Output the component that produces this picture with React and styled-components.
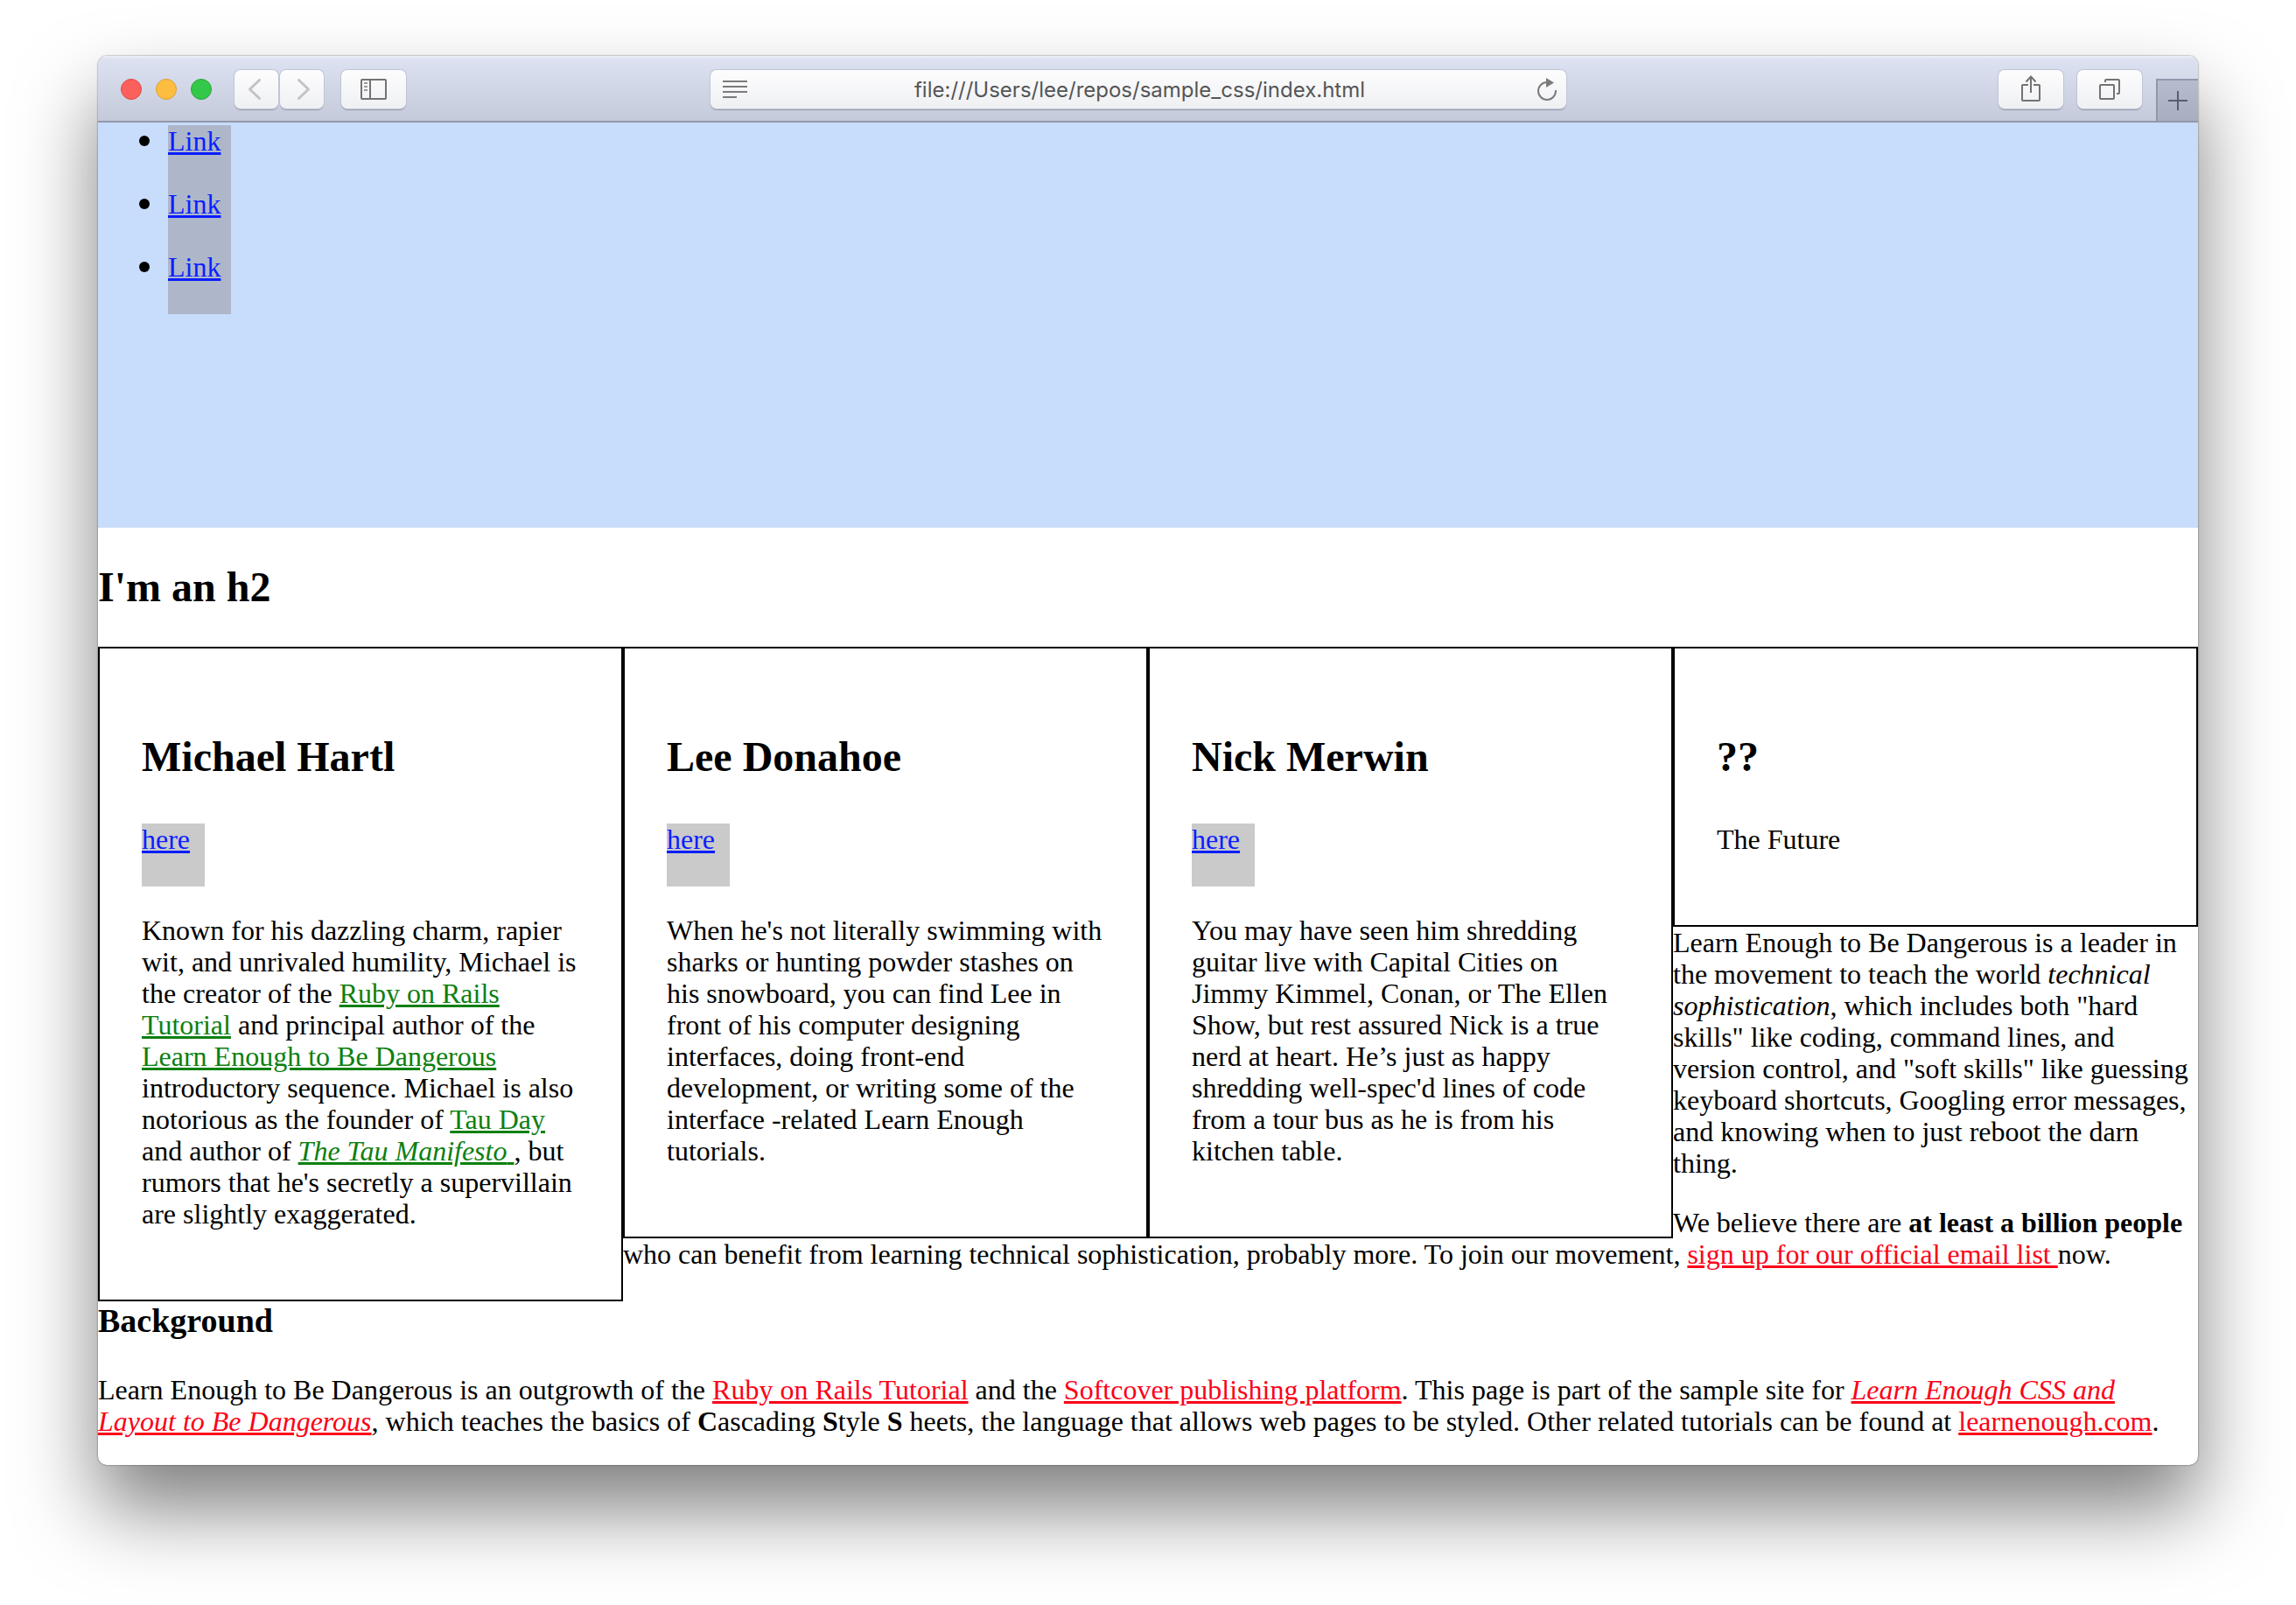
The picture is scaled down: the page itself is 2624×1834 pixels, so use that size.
import React from "react";
import styled, { createGlobalStyle, css } from "styled-components";

const GlobalStyle = createGlobalStyle`
  *, *::before, *::after { box-sizing: border-box; }
  body {
    margin: 0;
    background: #fff;
    color: #000;
    font-family: "Liberation Serif", "Times New Roman", Times, serif;
    font-size: 32px;
    line-height: 36px;
  }
`;

const BrowserWindow = styled.div`
  margin: 64px 112px 160px;
  border-radius: 10px;
  background: #fff;
  box-shadow: 0 0 2px rgba(0, 0, 0, 0.6), 0 50px 90px rgba(0, 0, 0, 0.5);
  overflow: hidden;
`;

const Toolbar = styled.header`
  display: flex;
  height: 76px;
  padding-left: 26px;
  border-bottom: 2px solid #9298ac;
  background: linear-gradient(#dde3f3, #c5cada);
  box-shadow: inset 0 2px 0 #e9edf7;
`;

const ToolbarGrid = styled.div`
  flex: 1;
  display: grid;
  grid-template-columns: 1fr minmax(0, 978px) 1fr;
  padding-top: 16px;
`;

const ToolGroup = styled.div`
  display: flex;
  align-items: flex-start;
  gap: ${(p) => p.$gap}px;
  justify-content: ${(p) => (p.$end ? "flex-end" : "flex-start")};
  padding-right: ${(p) => (p.$end ? 16 : 0)}px;
`;

const Lights = styled.div`
  display: flex;
  align-items: center;
  gap: 16px;
  height: 44px;
  margin-right: 6px;
`;

const Light = styled.button`
  width: 24px;
  height: 24px;
  padding: 0;
  border: 1px solid ${(p) => p.$edge};
  border-radius: 50%;
  background: ${(p) => p.$fill};
`;

const raised = css`
  height: 44px;
  border: 0;
  border-radius: 7px;
  background: linear-gradient(#fdfdfe, #eff0f2);
  box-shadow: 0 0 0 1px #bfc4d6, 0 2px 1px #9a9db0;
`;

const ToolButton = styled.button`
  ${raised}
  display: flex;
  align-items: center;
  justify-content: center;
  width: ${(p) => (p.$wide ? 74 : 50)}px;
  padding: 0;
  color: ${(p) => (p.$faded ? "#c3c3c5" : "#737373")};
`;

const NavPair = styled.div`
  display: flex;
  gap: 2px;
`;

const AddressBar = styled.form`
  ${raised}
  display: flex;
  align-items: center;
  padding: 0 11px 0 14px;
`;

const AddressButton = styled.button`
  display: flex;
  padding: 0;
  border: 0;
  background: none;
  color: #7b7b7b;
`;

const AddressInput = styled.input`
  flex: 1;
  min-width: 0;
  padding: 2px 6px 0 0;
  border: 0;
  outline: 0;
  background: none;
  color: #555;
  font: 24px/30px Inter, "Liberation Sans", sans-serif;
  text-align: center;
`;

const NewTab = styled.button`
  display: flex;
  align-items: center;
  justify-content: center;
  align-self: flex-end;
  width: 48px;
  height: 48px;
  padding: 0;
  border: 2px solid #9298ac;
  border-width: 2px 0 0 2px;
  background: linear-gradient(#b6bccd, #a8aebf);
  color: #585d70;
`;

const Icon = styled.svg`
  display: block;
  fill: none;
  stroke: currentColor;
  stroke-width: ${(p) => (p.$bold ? 3 : 2)}px;
`;

const Hero = styled.nav`
  height: 463px;
  padding-top: 3px;
  background: #c8dcfc;
`;

const LinkList = styled.ul`
  margin: 0;
  padding-left: 47px;
  list-style: none;
`;

const LinkItem = styled.li`
  display: flex;
  gap: 21px;

  &::before {
    content: "";
    width: 12px;
    height: 12px;
    margin-top: 12px;
    border-radius: 50%;
    background: #000;
  }
`;

const SquareLink = styled.a`
  display: block;
  width: 72px;
  height: 72px;
  background: ${(p) => (p.$onBlue ? "#aeb7ca" : "#cacaca")};
  color: #0a1eff;
`;

const PageTitle = styled.h2`
  margin: 40px 0;
  font-size: 48px;
  line-height: 56px;
`;

const Bio = styled.section`
  float: left;
  width: 25%;
  padding: 48px;
  border: 2px solid #000;
`;

const BioName = styled.h2`
  margin: 48px 0;
  font-size: 48px;
  line-height: 56px;
`;

const Paragraph = styled.p`
  margin: 0 0 32px;
  ${(p) => p.$spaced && "margin-top: 32px;"}
`;

const SectionTitle = styled.h3`
  clear: both;
  margin: 0 0 39px;
  font-size: 38px;
  line-height: 44px;
`;

const TextLink = styled.a`
  color: ${(p) => (p.$green ? "#0d8010" : "#fb0218")};
`;

function BackIcon() {
  return (
    <Icon width="20" height="24" viewBox="0 0 20 24" $bold strokeLinecap="round" strokeLinejoin="round">
      <path d="M13.500 1.500 2.500 12l11 10.500" />
    </Icon>
  );
}

function ForwardIcon() {
  return (
    <Icon width="20" height="24" viewBox="0 0 20 24" $bold strokeLinecap="round" strokeLinejoin="round">
      <path d="M6.500 1.500 17.500 12l-11 10.500" />
    </Icon>
  );
}

function SidebarIcon() {
  return (
    <Icon width="30" height="24" viewBox="0 0 30 24">
      <rect x="1" y="1" width="28" height="22" rx="1" />
      <path d="M11 1v22" />
      <path d="M4 5h4M4 9h4M4 13h4" opacity="0.7" />
    </Icon>
  );
}

function ReaderIcon() {
  return (
    <Icon width="28" height="20" viewBox="0 0 28 20">
      <path d="M0 1h28M0 7h28M0 13h28M0 19h16" />
    </Icon>
  );
}

function ReloadIcon() {
  return (
    <Icon width="22" height="28" viewBox="0 0 22 28">
      <path d="M11 6a10 10 0 1 0 10 10v-1" />
      <path d="M10 1v11l9-5.500z" fill="currentColor" stroke="none" />
    </Icon>
  );
}

function ShareIcon() {
  return (
    <Icon width="22" height="32" viewBox="0 0 22 32">
      <path d="M8 11H2a1 1 0 0 0-1 1v16a1 1 0 0 0 1 1h18a1 1 0 0 0 1-1V12a1 1 0 0 0-1-1h-6M11 20V2M5.500 7.500 11 1.500l5.500 6" />
    </Icon>
  );
}

function TabsIcon() {
  return (
    <Icon width="24" height="24" viewBox="0 0 24 24">
      <rect x="1" y="7" width="16" height="16" rx="1" />
      <path d="M7 4V2a1 1 0 0 1 1-1h14a1 1 0 0 1 1 1v14a1 1 0 0 1-1 1h-2" />
    </Icon>
  );
}

function PlusIcon() {
  return (
    <Icon width="22" height="22" viewBox="0 0 22 22">
      <path d="M11 0v22M0 11h22" />
    </Icon>
  );
}

const lights = [
  { label: "Close", fill: "#fc605c", edge: "#e04744" },
  { label: "Minimize", fill: "#fdbd41", edge: "#dfa032" },
  { label: "Zoom", fill: "#34c84a", edge: "#27a637" },
];

function BrowserToolbar() {
  return (
    <Toolbar>
      <ToolbarGrid>
        <ToolGroup $gap={20}>
          <Lights>
            {lights.map((l) => (
              <Light key={l.label} type="button" aria-label={l.label} $fill={l.fill} $edge={l.edge} />
            ))}
          </Lights>
          <NavPair>
            <ToolButton type="button" aria-label="Back" $faded><BackIcon /></ToolButton>
            <ToolButton type="button" aria-label="Forward" $faded><ForwardIcon /></ToolButton>
          </NavPair>
          <ToolButton type="button" aria-label="Show sidebar" $wide><SidebarIcon /></ToolButton>
        </ToolGroup>
        <AddressBar>
          <AddressButton type="button" aria-label="Reader view"><ReaderIcon /></AddressButton>
          <AddressInput
            aria-label="Address"
            readOnly
            value="file:///Users/lee/repos/sample_css/index.html"
          />
          <AddressButton type="button" aria-label="Reload"><ReloadIcon /></AddressButton>
        </AddressBar>
        <ToolGroup $gap={16} $end>
          <ToolButton type="button" aria-label="Share" $wide><ShareIcon /></ToolButton>
          <ToolButton type="button" aria-label="Show all tabs" $wide><TabsIcon /></ToolButton>
        </ToolGroup>
      </ToolbarGrid>
      <NewTab type="button" aria-label="New tab"><PlusIcon /></NewTab>
    </Toolbar>
  );
}

export default function App() {
  return (
    <>
      <GlobalStyle />
      <BrowserWindow>
        <BrowserToolbar />
        <Hero>
          <LinkList>
            {[1, 2, 3].map((n) => (
              <LinkItem key={n}><SquareLink href="#" $onBlue>Link</SquareLink></LinkItem>
            ))}
          </LinkList>
        </Hero>
        <main>
          <PageTitle>I'm an h2</PageTitle>
          <Bio>
            <BioName>Michael Hartl</BioName>
            <SquareLink href="#">here</SquareLink>
            <Paragraph $spaced>
              Known for his dazzling charm, rapier wit, and unrivaled humility,
              Michael is the creator of the{" "}
              <TextLink $green href="#">Ruby on Rails Tutorial</TextLink> and
              principal author of the{" "}
              <TextLink $green href="#">Learn Enough to Be Dangerous</TextLink>{" "}
              introductory sequence. Michael is also notorious as the founder
              of <TextLink $green href="#">Tau Day</TextLink> and author of{" "}
              <TextLink $green href="#"><em>The Tau Manifesto</em>{" "}</TextLink>, but
              rumors that he's secretly a supervillain are slightly exaggerated.
            </Paragraph>
          </Bio>
          <Bio>
            <BioName>Lee Donahoe</BioName>
            <SquareLink href="#">here</SquareLink>
            <Paragraph $spaced>
              When he's not literally swimming with sharks or hunting powder
              stashes on his snowboard, you can find Lee in front of his
              computer designing interfaces, doing front-end development, or
              writing some of the interface -related Learn Enough tutorials.
            </Paragraph>
          </Bio>
          <Bio>
            <BioName>Nick Merwin</BioName>
            <SquareLink href="#">here</SquareLink>
            <Paragraph $spaced>
              You may have seen him shredding guitar live with Capital Cities
              on Jimmy Kimmel, Conan, or The Ellen Show, but rest assured Nick
              is a true nerd at heart. He’s just as happy shredding well-spec'd
              lines of code from a tour bus as he is from his kitchen table.
            </Paragraph>
          </Bio>
          <Bio>
            <BioName>??</BioName>
            <Paragraph>The Future</Paragraph>
          </Bio>
          <Paragraph>
            Learn Enough to Be Dangerous is a leader in the movement to teach
            the world <em>technical sophistication</em>, which includes both
            "hard skills" like coding, command lines, and version control, and
            "soft skills" like guessing keyboard shortcuts, Googling error
            messages, and knowing when to just reboot the darn thing.
          </Paragraph>
          <Paragraph>
            We believe there are <strong>at least a billion people</strong> who
            can benefit from learning technical sophistication, probably more.
            To join our movement,{" "}
            <TextLink href="#">sign up for our official email list </TextLink>now.
          </Paragraph>
          <SectionTitle>Background</SectionTitle>
          <Paragraph>
            Learn Enough to Be Dangerous is an outgrowth of the{" "}
            <TextLink href="#">Ruby on Rails Tutorial</TextLink> and the{" "}
            <TextLink href="#">Softcover publishing platform</TextLink>. This
            page is part of the sample site for{" "}
            <TextLink href="#"><em>Learn Enough CSS and Layout to Be Dangerous</em></TextLink>,
            which teaches the basics of <strong>C</strong>ascading{" "}
            <strong>S</strong>tyle <strong>S</strong> heets, the language that
            allows web pages to be styled. Other related tutorials can be found
            at <TextLink href="#">learnenough.com</TextLink>.
          </Paragraph>
        </main>
      </BrowserWindow>
    </>
  );
}
